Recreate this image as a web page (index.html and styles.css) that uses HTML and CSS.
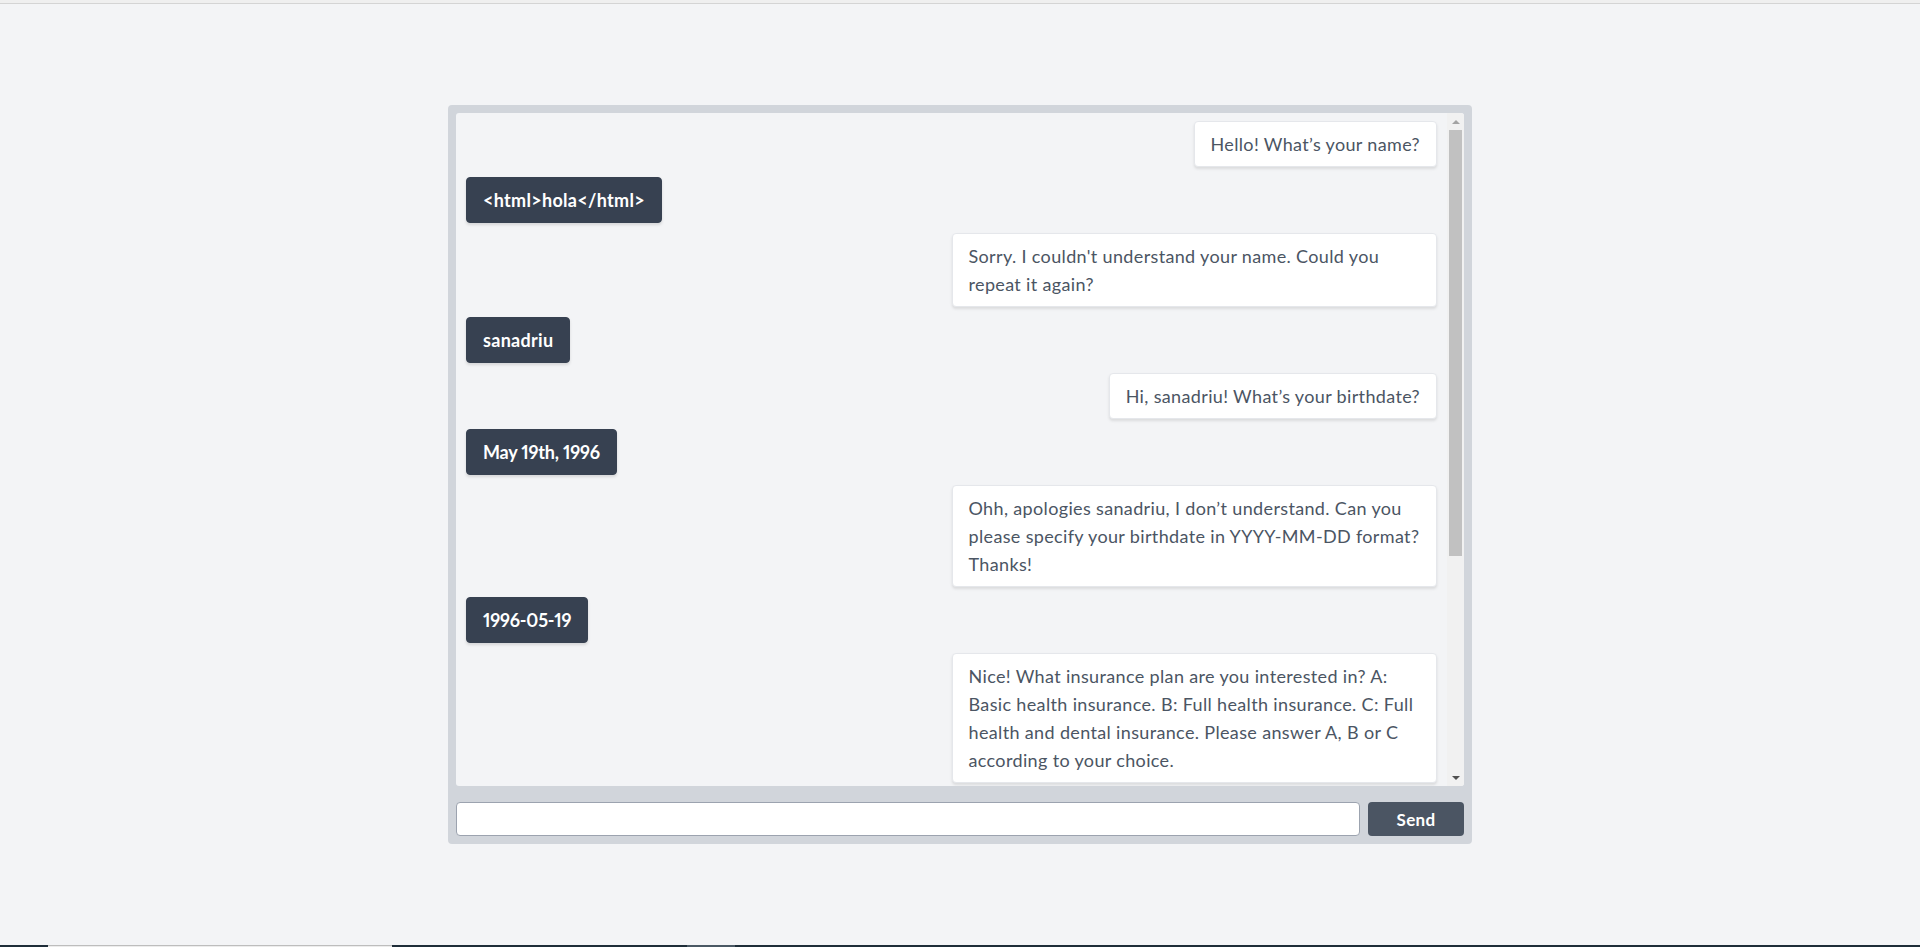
FILE: index.html
```html
<!DOCTYPE html>
<html lang="en">
<head>
<meta charset="utf-8">
<title>Chat</title>
<link rel="stylesheet" href="styles.css">
</head>
<body>
<div class="topbar"></div>
<main class="page">
  <section class="chat">
    <div class="panel">
      <div class="messages">
        <div class="msg bot"><p class="bubble">Hello! What’s your name?</p></div>
        <div class="msg user"><p class="bubble">&lt;html&gt;hola&lt;/html&gt;</p></div>
        <div class="msg bot"><p class="bubble">Sorry. I couldn't understand your name. Could you repeat it again?</p></div>
        <div class="msg user"><p class="bubble">sanadriu</p></div>
        <div class="msg bot"><p class="bubble">Hi, sanadriu! What’s your birthdate?</p></div>
        <div class="msg user"><p class="bubble num">May 19th, 1996</p></div>
        <div class="msg bot"><p class="bubble">Ohh, apologies sanadriu, I don’t understand. Can you please specify your birthdate in YYYY-MM-DD format? Thanks!</p></div>
        <div class="msg user"><p class="bubble num">1996-05-19</p></div>
        <div class="msg bot"><p class="bubble">Nice! What insurance plan are you interested in? A: Basic health insurance. B: Full health insurance. C: Full health and dental insurance. Please answer A, B or C according to your choice.</p></div>
      </div>
      <div class="scrollbar">
        <div class="sb-btn"><span class="arrow-up"></span></div>
        <div class="sb-track"><div class="sb-thumb"></div></div>
        <div class="sb-btn"><span class="arrow-down"></span></div>
      </div>
    </div>
    <form class="composer" onsubmit="return false">
      <input class="input" type="text" aria-label="Message">
      <button class="send" type="submit">Send</button>
    </form>
  </section>
</main>
<div class="taskbar">
  <span class="seg dark s1"></span>
  <span class="seg light s2"></span>
  <span class="seg dark s3"></span>
  <span class="seg slate s4"></span>
  <span class="seg dark s5"></span>
</div>
</body>
</html>
```
FILE: styles.css
```css
* { box-sizing: border-box; }

html, body {
  margin: 0;
  padding: 0;
  height: 100%;
}

body {
  background: #f3f4f6;
  font-family: "Lato", "Noto Sans", sans-serif;
  overflow: hidden;
}

.topbar {
  height: 4px;
  background: #efefef;
  border-bottom: 1px solid #d4d4d4;
}

.page {
  padding-top: 101px;
}

.chat {
  width: 1024px;
  margin: 0 auto;
  background: #d1d5db;
  padding: 8px;
  border-radius: 4px;
}

.panel {
  display: flex;
  height: 673px;
  background: #f3f4f6;
  border-radius: 3px;
  overflow: hidden;
}

.messages {
  flex: 1;
  min-width: 0;
  display: flex;
  flex-direction: column;
  gap: 10px;
  padding: 8px 10px;
  overflow: hidden;
}

.msg {
  display: flex;
}

.msg.bot { justify-content: flex-end; }
.msg.user { justify-content: flex-start; }

.bubble {
  margin: 0;
  max-width: 50%;
  padding: 8px 16px;
  font-size: 18px;
  line-height: 28px;
  border-radius: 4px;
  border: 1px solid transparent;
}

.bot .bubble {
  background: #ffffff;
  color: #4b5563;
  border-color: #e5e7eb;
  letter-spacing: 0.35px;
  box-shadow: 0 2px 3px rgba(0, 0, 0, 0.1);
}

.user .bubble {
  background: #374151;
  border-color: #374151;
  color: #ffffff;
  font-weight: 700;
  letter-spacing: 0.3px;
  font-variant-numeric: proportional-nums;
  box-shadow: 0 2px 3px rgba(0, 0, 0, 0.12);
}

.user .bubble.num {
  letter-spacing: -0.2px;
}

.scrollbar {
  width: 17px;
  flex: 0 0 17px;
  display: flex;
  flex-direction: column;
  background: #f1f1f1;
}

.sb-btn {
  height: 17px;
  flex: 0 0 17px;
  display: flex;
  align-items: center;
  justify-content: center;
}

.arrow-up {
  width: 0;
  height: 0;
  border-left: 4px solid transparent;
  border-right: 4px solid transparent;
  border-bottom: 4px solid #a3a3a3;
}

.arrow-down {
  width: 0;
  height: 0;
  border-left: 4px solid transparent;
  border-right: 4px solid transparent;
  border-top: 4px solid #505050;
}

.sb-track {
  flex: 1;
  padding: 0 2px;
}

.sb-thumb {
  height: 426px;
  background: #c1c1c1;
}

.composer {
  display: flex;
  gap: 8px;
  margin: 16px 0 0;
}

.input {
  flex: 1;
  height: 34px;
  border: 1px solid #9ca3af;
  border-radius: 4px;
  background: #ffffff;
  font: inherit;
  font-size: 16px;
  padding: 0 8px;
}

.send {
  width: 96px;
  height: 34px;
  border: none;
  border-radius: 4px;
  background: #4b5563;
  color: #ffffff;
  font-family: inherit;
  font-weight: 700;
  font-size: 17px;
  letter-spacing: 0.3px;
  cursor: pointer;
}

.taskbar {
  position: fixed;
  left: 0;
  right: 0;
  bottom: 0;
  height: 2px;
  display: flex;
}

.seg { display: block; height: 2px; }
.seg.dark { background: #1e2d38; }
.seg.light { background: #ececec; border-top: 1px solid #bdbdbd; }
.seg.slate { background: #4a5864; }
.s1 { width: 48px; }
.s2 { width: 344px; }
.s3 { width: 295px; }
.s4 { width: 48px; }
.s5 { flex: 1; }
```
